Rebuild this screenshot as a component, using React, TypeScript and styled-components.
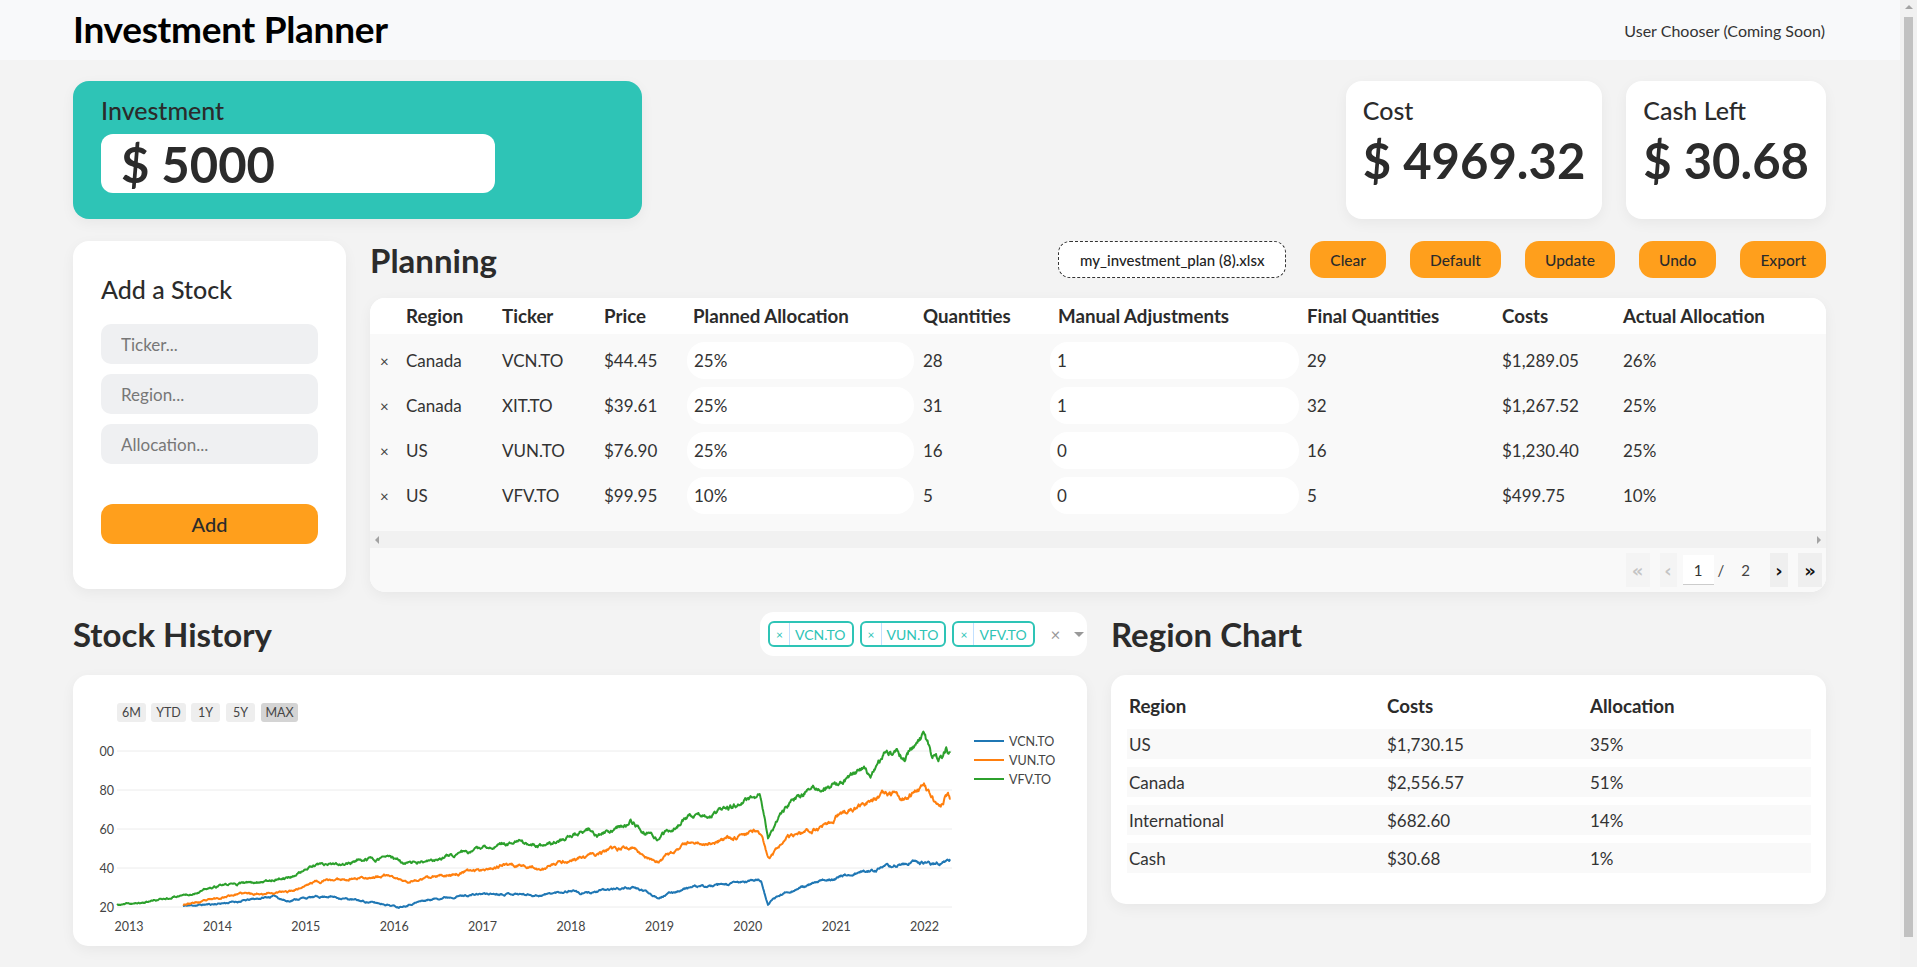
import React from 'react';
import styled, { createGlobalStyle } from 'styled-components';

const GlobalStyle = createGlobalStyle`
  html, body { margin: 0; padding: 0; }
  html { overflow: hidden; }
  body {
    background: #f3f3f3;
    font-family: Lato, "Open Sans", Arial, sans-serif;
    color: #2b2b2b;
  }
  * { box-sizing: border-box; }
`;

const TEAL = '#2ec4b6';
const ORANGE = '#ff9f1c';

const Page = styled.div`
  margin-right: 17px;
`;

const ScrollRail = styled.div`
  position: fixed;
  top: 0;
  right: 0;
  width: 17px;
  height: 100vh;
  background: #f1f1f1;
  display: flex;
  flex-direction: column;
  align-items: center;
`;

const RailArrow = styled.span<{ $up?: boolean }>`
  margin: 5px 0;
  width: 0;
  height: 0;
  border-left: 4px solid transparent;
  border-right: 4px solid transparent;
  ${p => (p.$up ? 'border-bottom: 4px solid #a3a3a3;' : 'border-top: 4px solid #a3a3a3;')}
`;

const RailThumb = styled.div`
  flex: 1;
  width: 9px;
  margin: 3px 0 30px;
  background: #c1c1c1;
`;

const TopBar = styled.header`
  height: 60px;
  background: #f8f9fa;
  display: flex;
  align-items: center;
  justify-content: space-between;
  padding: 0 75px 3px 73px;
`;

const AppTitle = styled.h1`
  margin: 0;
  font-size: 37px;
  font-weight: 700;
  color: #000;
  letter-spacing: -0.3px;
`;

const UserChooser = styled.div`
  font-size: 16px;
  color: #333;
  padding-top: 3px;
`;

const Main = styled.main`
  padding: 21px 74px 40px 73px;
`;

const TopRow = styled.section`
  display: flex;
  justify-content: space-between;
  height: 138px;
`;

const Card = styled.div`
  background: #fff;
  border-radius: 16px;
  box-shadow: 0 4px 14px rgba(0, 0, 0, 0.05);
`;

const InvestmentCard = styled(Card)`
  width: 569px;
  background: ${TEAL};
  padding: 15px 28px;
`;

const CardLabel = styled.div`
  font-size: 25px;
  font-weight: 500;
  line-height: 29px;
  color: #2b2b2b;
`;

const AmountBox = styled.div`
  margin-top: 9px;
  width: 394px;
  height: 59px;
  background: #fff;
  border-radius: 12px;
  padding-left: 20px;
  display: flex;
  align-items: center;
  font-size: 49px;
  font-weight: 700;
  color: #2b2b2b;
`;

const StatGroup = styled.div`
  display: flex;
  gap: 24px;
`;

const StatCard = styled(Card)`
  padding: 15px 17px;
`;

const StatValue = styled.div`
  margin-top: 6px;
  font-size: 49px;
  line-height: 58px;
  font-weight: 700;
  color: #2b2b2b;
`;

const MiddleRow = styled.section`
  margin-top: 22px;
  display: flex;
  gap: 24px;
  align-items: flex-start;
`;

const AddCard = styled(Card)`
  width: 273px;
  height: 348px;
  padding: 34px 28px 0;
  display: flex;
  flex-direction: column;
`;

const AddTitle = styled.div`
  font-size: 25px;
  font-weight: 500;
  line-height: 29px;
  margin-bottom: 20px;
`;

const FieldStack = styled.div`
  display: flex;
  flex-direction: column;
  gap: 10px;
`;

const Field = styled.input`
  height: 40px;
  border: none;
  border-radius: 10px;
  background: #eff0f2;
  padding: 0 20px;
  font-family: inherit;
  font-size: 17px;
  color: #333;
  outline: none;
  &::placeholder { color: #777; }
`;

const AddButton = styled.button`
  margin-top: 40px;
  height: 40px;
  border: none;
  border-radius: 12px;
  background: ${ORANGE};
  font-family: inherit;
  font-size: 20px;
  font-weight: 500;
  color: #2b2b2b;
`;

const PlanningCol = styled.div`
  flex: 1;
  min-width: 0;
`;

const SectionHead = styled.div<{ $h?: number }>`
  height: ${p => p.$h ?? 37}px;
  display: flex;
  align-items: center;
  justify-content: space-between;
`;

const SectionTitle = styled.h2`
  margin: 0;
  font-size: 33px;
  font-weight: 700;
  color: #2b2b2b;
`;

const Actions = styled.div`
  display: flex;
  align-items: center;
  gap: 24px;
`;

const FileBox = styled.div`
  width: 228px;
  height: 37px;
  border: 1px dashed #333;
  border-radius: 12px;
  background: #fff;
  display: flex;
  align-items: center;
  justify-content: center;
  font-size: 15px;
  font-weight: 500;
  color: #222;
`;

const ActionButton = styled.button`
  height: 37px;
  padding: 0 20px;
  border: none;
  border-radius: 14px;
  background: ${ORANGE};
  font-family: inherit;
  font-size: 15.5px;
  font-weight: 500;
  color: #2b2b2b;
`;

const TableCard = styled(Card)`
  margin-top: 20px;
  border-radius: 15px;
  overflow: hidden;
`;

const COLS = '36px 96px 102px 83px 236px 127px 257px 195px 121px 1fr';

const HeadRow = styled.div`
  display: grid;
  grid-template-columns: ${COLS};
  height: 36px;
  align-items: center;
  background: #fff;
  font-size: 18.7px;
  font-weight: 700;
  color: #2b2b2b;
`;

const HeadCell = styled.div<{ $pad?: number }>`
  padding-left: ${p => p.$pad ?? 0}px;
  white-space: nowrap;
`;

const TableBody = styled.div`
  background: #f9f9f9;
  padding: 4px 0 13px;
`;

const BodyRow = styled.div`
  display: grid;
  grid-template-columns: ${COLS};
  height: 45px;
  align-items: center;
  font-size: 17px;
  color: #333;
`;

const RemoveCell = styled.div`
  padding-left: 10px;
  font-size: 15px;
  color: #444;
`;

const Pill = styled.div<{ $w: number }>`
  width: ${p => p.$w}px;
  height: 37px;
  background: #fff;
  border-radius: 18px;
  padding-left: 7px;
  display: flex;
  align-items: center;
`;

const HScroll = styled.div`
  height: 17px;
  background: #f1f1f1;
  display: flex;
  align-items: center;
  justify-content: space-between;
  padding: 0 5px;
`;

const Arrow = styled.span<{ $dir: 'left' | 'right' }>`
  width: 0;
  height: 0;
  border-top: 4px solid transparent;
  border-bottom: 4px solid transparent;
  ${p => (p.$dir === 'left' ? 'border-right: 4px solid #a3a3a3;' : 'border-left: 4px solid #a3a3a3;')}
`;

const Pager = styled.div`
  height: 44px;
  background: #f9f9f9;
  display: flex;
  align-items: center;
  justify-content: flex-end;
  padding-right: 4px;
`;

const PageBtn = styled.div<{ $w: number; $ml?: number; $on?: boolean }>`
  width: ${p => p.$w}px;
  height: 34px;
  margin-left: ${p => p.$ml ?? 0}px;
  background: ${p => (p.$on ? '#efefef' : '#f4f4f4')};
  display: flex;
  align-items: center;
  justify-content: center;
  font-size: 18px;
  font-weight: ${p => (p.$on ? 900 : 700)};
  color: ${p => (p.$on ? '#111' : '#c4c4c4')};
  font-family: "DejaVu Sans", sans-serif;
`;

const PageInput = styled.div`
  width: 31px;
  height: 30px;
  margin-left: 6px;
  background: #fff;
  border-bottom: 1px solid #ccc;
  display: flex;
  align-items: center;
  justify-content: center;
  font-size: 15px;
  color: #333;
`;

const PageText = styled.span<{ $ml: number }>`
  margin-left: ${p => p.$ml}px;
  font-size: 15px;
  color: #444;
`;

const BottomRow = styled.section`
  margin-top: 20px;
  display: grid;
  grid-template-columns: 1014px 1fr;
  column-gap: 24px;
`;

const MultiSelect = styled.div`
  width: 327px;
  height: 44px;
  background: #fff;
  border-radius: 14px;
  display: flex;
  align-items: center;
  padding-left: 8px;
  gap: 6px;
`;

const Chip = styled.div`
  height: 26px;
  border: 2px solid ${TEAL};
  border-radius: 6px;
  display: flex;
  align-items: stretch;
  color: ${TEAL};
`;

const ChipX = styled.span`
  width: 20px;
  border-right: 1px solid #c2e0ff;
  display: flex;
  align-items: center;
  justify-content: center;
  font-size: 12px;
`;

const ChipLabel = styled.span`
  padding: 0 6px 0 5px;
  display: flex;
  align-items: center;
  font-size: 14px;
`;

const ClearX = styled.span`
  margin-left: 10px;
  font-size: 17px;
  color: #999;
`;

const Caret = styled.span`
  margin-left: 8px;
  width: 0;
  height: 0;
  border-left: 5px solid transparent;
  border-right: 5px solid transparent;
  border-top: 5px solid #999;
`;

const ChartCard = styled(Card)`
  margin-top: 19px;
  height: 271px;
  border-radius: 15px;
  overflow: hidden;
  svg { display: block; }
`;

const RegionCard = styled(Card)`
  margin-top: 19px;
  height: 229px;
  border-radius: 15px;
  padding: 8px 15px 0 16px;
`;

const RegionTable = styled.table`
  width: 100%;
  border-collapse: separate;
  border-spacing: 0 8px;
  table-layout: fixed;
  font-size: 17px;
  th {
    text-align: left;
    font-size: 18.7px;
    font-weight: 700;
    height: 30px;
    padding: 0 2px;
    color: #2b2b2b;
  }
  td {
    background: #f9f9f9;
    height: 30px;
    padding: 0 2px;
    color: #333;
  }
`;

/* ---------- chart data ---------- */

function mulberry32(a: number) {
  return function () {
    a |= 0;
    a = (a + 0x6d2b79f5) | 0;
    let t = Math.imul(a ^ (a >>> 15), 1 | a);
    t = (t + Math.imul(t ^ (t >>> 7), 61 | t)) ^ t;
    return ((t ^ (t >>> 14)) >>> 0) / 4294967296;
  };
}

const yOf = (v: number) => 908 - (v - 20) * 1.95;

function buildPath(keys: [number, number][], seed: number, amp: number) {
  const rnd = mulberry32(seed);
  let n = 0;
  let d = '';
  let k = 0;
  const x0 = keys[0][0];
  const x1 = keys[keys.length - 1][0];
  for (let x = x0; x <= x1; x += 0.6) {
    while (k < keys.length - 2 && x > keys[k + 1][0]) k++;
    const [ax, av] = keys[k];
    const [bx, bv] = keys[k + 1];
    const t = Math.min(1, Math.max(0, (x - ax) / (bx - ax)));
    const v = av + (bv - av) * t;
    n = n * 0.85 + (rnd() - 0.5) * amp;
    const y = yOf(v + (n * v) / 40);
    d += (d ? 'L' : 'M') + x.toFixed(1) + ' ' + y.toFixed(1);
  }
  return d;
}

const GREEN_KEYS: [number, number][] = [
  [116, 21], [140, 22], [160, 24], [190, 27], [221, 31], [250, 32.5], [290, 35.5], [300, 38], [313, 41],
  [340, 41.5], [360, 44], [389, 45.6], [404, 42], [435, 43.6], [443, 46], [481, 49.7], [511, 53.8],
  [530, 52], [542, 50.8], [577, 58], [588, 60], [596, 56], [630, 64], [645, 58], [657, 55], [688, 66.7],
  [710, 67], [735, 72], [757, 77], [760, 75], [767, 56], [775, 64], [787, 72], [807, 79.5], [827, 82],
  [847, 86.6], [863, 91], [870, 87], [883, 97], [897, 100.5], [903, 96], [913, 103.6], [923, 107],
  [930, 97.5], [940, 96], [945, 101.5], [950, 98],
];

const ORANGE_KEYS: [number, number][] = [
  [182, 21.5], [200, 22.5], [236, 26.7], [260, 27], [286, 27.7], [300, 30], [313, 33], [335, 34],
  [358, 35], [389, 36], [404, 32.8], [420, 34], [443, 36], [481, 39.5], [511, 42], [542, 39.5],
  [560, 43], [588, 46], [610, 49], [630, 50.8], [645, 46], [657, 43], [688, 52.8], [710, 53],
  [737, 56.4], [757, 60], [760, 58], [767, 44.6], [775, 49], [787, 55], [820, 61], [847, 70],
  [867, 72.8], [883, 78], [903, 75.4], [923, 83.6], [933, 75], [940, 73.8], [947, 78.5], [950, 75.4],
];

const BLUE_KEYS: [number, number][] = [
  [182, 20.5], [213, 21.5], [240, 23], [274, 25.6], [286, 23], [300, 24.5], [328, 25.6], [366, 22.6],
  [385, 21.5], [397, 20], [420, 23], [443, 25], [481, 26.7], [510, 27], [538, 26], [573, 28.7],
  [580, 26.7], [610, 29], [630, 30], [645, 28], [657, 25], [687, 30], [720, 31], [757, 34], [760, 33],
  [767, 21.5], [775, 25], [787, 28], [833, 35], [877, 39.5], [913, 43], [930, 42], [950, 44],
];

const SERIES = [
  { name: 'VCN.TO', color: '#1f77b4', keys: BLUE_KEYS, seed: 11 },
  { name: 'VUN.TO', color: '#ff7f0e', keys: ORANGE_KEYS, seed: 23 },
  { name: 'VFV.TO', color: '#2ca02c', keys: GREEN_KEYS, seed: 37 },
];

const RANGES = [
  { label: '6M', x: 116, w: 29 },
  { label: 'YTD', x: 150, w: 35 },
  { label: '1Y', x: 190, w: 29 },
  { label: '5Y', x: 225, w: 29 },
  { label: 'MAX', x: 260, w: 37, on: true },
];

const Y_TICKS = [
  { v: 100, label: '00' },
  { v: 80, label: '80' },
  { v: 60, label: '60' },
  { v: 40, label: '40' },
  { v: 20, label: '20' },
];

const YEARS = ['2013', '2014', '2015', '2016', '2017', '2018', '2019', '2020', '2021', '2022'];

function StockChart() {
  const paths = React.useMemo(
    () => SERIES.map(s => ({ ...s, d: buildPath(s.keys, s.seed, 1.0) })),
    []
  );
  return (
    <svg width="1014" height="271" viewBox="72 676 1014 271" fontFamily="Lato, sans-serif">
      {RANGES.map(r => (
        <g key={r.label}>
          <rect x={r.x} y={704} width={r.w} height={19} rx={3} fill={r.on ? '#d4d4d4' : '#eeeeee'} />
          <text x={r.x + r.w / 2} y={718} fontSize="12.5" fill="#444" textAnchor="middle">
            {r.label}
          </text>
        </g>
      ))}
      {Y_TICKS.map(t => (
        <g key={t.v}>
          <line x1={116} x2={951} y1={yOf(t.v)} y2={yOf(t.v)} stroke="#ececec" strokeWidth="1" />
          <text x={113} y={yOf(t.v) + 4.5} fontSize="12.5" fill="#444" textAnchor="end">
            {t.label}
          </text>
        </g>
      ))}
      {YEARS.map((y, i) => (
        <text key={y} x={128 + i * 88.4} y={931.5} fontSize="12.5" fill="#444" textAnchor="middle">
          {y}
        </text>
      ))}
      {paths.map(p => (
        <path key={p.name} d={p.d} fill="none" stroke={p.color} strokeWidth="2" strokeLinejoin="round" />
      ))}
      {SERIES.map((s, i) => (
        <g key={s.name}>
          <line x1={973} x2={1003} y1={742 + i * 19} y2={742 + i * 19} stroke={s.color} strokeWidth="2" />
          <text x={1008} y={746.5 + i * 19} fontSize="12.5" fill="#444">
            {s.name}
          </text>
        </g>
      ))}
    </svg>
  );
}

/* ---------- data ---------- */

const ROWS = [
  { region: 'Canada', ticker: 'VCN.TO', price: '$44.45', planned: '25%', qty: '28', manual: '1', fin: '29', cost: '$1,289.05', actual: '26%' },
  { region: 'Canada', ticker: 'XIT.TO', price: '$39.61', planned: '25%', qty: '31', manual: '1', fin: '32', cost: '$1,267.52', actual: '25%' },
  { region: 'US', ticker: 'VUN.TO', price: '$76.90', planned: '25%', qty: '16', manual: '0', fin: '16', cost: '$1,230.40', actual: '25%' },
  { region: 'US', ticker: 'VFV.TO', price: '$99.95', planned: '10%', qty: '5', manual: '0', fin: '5', cost: '$499.75', actual: '10%' },
];

const REGIONS = [
  ['US', '$1,730.15', '35%'],
  ['Canada', '$2,556.57', '51%'],
  ['International', '$682.60', '14%'],
  ['Cash', '$30.68', '1%'],
];

export default function App() {
  return (
    <>
      <GlobalStyle />
      <Page>
        <TopBar>
          <AppTitle>Investment Planner</AppTitle>
          <UserChooser>User Chooser (Coming Soon)</UserChooser>
        </TopBar>
        <Main>
          <TopRow>
            <InvestmentCard>
              <CardLabel>Investment</CardLabel>
              <AmountBox>$ 5000</AmountBox>
            </InvestmentCard>
            <StatGroup>
              <StatCard>
                <CardLabel>Cost</CardLabel>
                <StatValue>$ 4969.32</StatValue>
              </StatCard>
              <StatCard>
                <CardLabel>Cash Left</CardLabel>
                <StatValue>$ 30.68</StatValue>
              </StatCard>
            </StatGroup>
          </TopRow>

          <MiddleRow>
            <AddCard>
              <AddTitle>Add a Stock</AddTitle>
              <FieldStack>
                <Field placeholder="Ticker..." />
                <Field placeholder="Region..." />
                <Field placeholder="Allocation..." />
              </FieldStack>
              <AddButton>Add</AddButton>
            </AddCard>

            <PlanningCol>
              <SectionHead>
                <SectionTitle>Planning</SectionTitle>
                <Actions>
                  <FileBox>my_investment_plan (8).xlsx</FileBox>
                  <ActionButton>Clear</ActionButton>
                  <ActionButton>Default</ActionButton>
                  <ActionButton>Update</ActionButton>
                  <ActionButton>Undo</ActionButton>
                  <ActionButton>Export</ActionButton>
                </Actions>
              </SectionHead>
              <TableCard>
                <HeadRow>
                  <HeadCell />
                  <HeadCell>Region</HeadCell>
                  <HeadCell>Ticker</HeadCell>
                  <HeadCell>Price</HeadCell>
                  <HeadCell $pad={6}>Planned Allocation</HeadCell>
                  <HeadCell>Quantities</HeadCell>
                  <HeadCell $pad={8}>Manual Adjustments</HeadCell>
                  <HeadCell>Final Quantities</HeadCell>
                  <HeadCell>Costs</HeadCell>
                  <HeadCell>Actual Allocation</HeadCell>
                </HeadRow>
                <TableBody>
                  {ROWS.map(r => (
                    <BodyRow key={r.ticker}>
                      <RemoveCell>×</RemoveCell>
                      <div>{r.region}</div>
                      <div>{r.ticker}</div>
                      <div>{r.price}</div>
                      <Pill $w={227}>{r.planned}</Pill>
                      <div>{r.qty}</div>
                      <Pill $w={249}>{r.manual}</Pill>
                      <div>{r.fin}</div>
                      <div>{r.cost}</div>
                      <div>{r.actual}</div>
                    </BodyRow>
                  ))}
                </TableBody>
                <HScroll>
                  <Arrow $dir="left" />
                  <Arrow $dir="right" />
                </HScroll>
                <Pager>
                  <PageBtn $w={24}>«</PageBtn>
                  <PageBtn $w={17} $ml={10}>‹</PageBtn>
                  <PageInput>1</PageInput>
                  <PageText $ml={4}>/</PageText>
                  <PageText $ml={17}>2</PageText>
                  <PageBtn $w={18} $ml={20} $on>›</PageBtn>
                  <PageBtn $w={24} $ml={10} $on>»</PageBtn>
                </Pager>
              </TableCard>
            </PlanningCol>
          </MiddleRow>

          <BottomRow>
            <div>
              <SectionHead $h={44}>
                <SectionTitle>Stock History</SectionTitle>
                <MultiSelect>
                  {['VCN.TO', 'VUN.TO', 'VFV.TO'].map(t => (
                    <Chip key={t}>
                      <ChipX>×</ChipX>
                      <ChipLabel>{t}</ChipLabel>
                    </Chip>
                  ))}
                  <ClearX>×</ClearX>
                  <Caret />
                </MultiSelect>
              </SectionHead>
              <ChartCard>
                <StockChart />
              </ChartCard>
            </div>
            <div>
              <SectionHead $h={44}>
                <SectionTitle>Region Chart</SectionTitle>
              </SectionHead>
              <RegionCard>
                <RegionTable>
                  <colgroup>
                    <col style={{ width: 258 }} />
                    <col style={{ width: 203 }} />
                    <col />
                  </colgroup>
                  <thead>
                    <tr>
                      <th>Region</th>
                      <th>Costs</th>
                      <th>Allocation</th>
                    </tr>
                  </thead>
                  <tbody>
                    {REGIONS.map(r => (
                      <tr key={r[0]}>
                        <td>{r[0]}</td>
                        <td>{r[1]}</td>
                        <td>{r[2]}</td>
                      </tr>
                    ))}
                  </tbody>
                </RegionTable>
              </RegionCard>
            </div>
          </BottomRow>
        </Main>
      </Page>
      <ScrollRail>
        <RailArrow $up />
        <RailThumb />
      </ScrollRail>
    </>
  );
}
